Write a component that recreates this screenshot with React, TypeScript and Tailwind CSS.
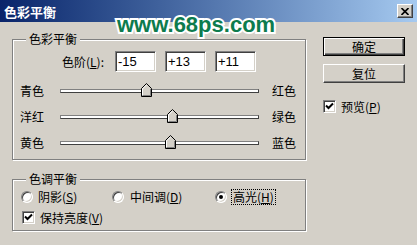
import React from "react";

const font = { fontFamily: '"Noto Sans CJK SC", "Liberation Sans", sans-serif' };

function Thumb({ value }: { value: number }) {
  // track is 199px wide, thumb 11px
  const left = Math.round(((value + 100) / 200) * 188);
  return (
    <svg
      className="absolute top-[-7px]"
      style={{ left }}
      width="11"
      height="14"
      viewBox="0 0 11 14"
    >
      <path d="M0.5 13.5 V5.5 L5.5 0.5 L10.5 5.5 V13.5 Z" fill="#d4d0c8" stroke="#000" />
      <path d="M1.5 12.5 V5.9 L5.5 1.9" fill="none" stroke="#fff" />
      <path d="M9.5 6 V12.5 H1.5" fill="none" stroke="#808080" />
    </svg>
  );
}

function SliderRow({ left, right, value }: { left: string; right: string; value: number }) {
  return (
    <div className="flex items-center h-[26px] pl-[7px]">
      <span className="w-[40px] text-[12px] leading-none">{left}</span>
      <div className="relative w-[199px] h-[4px] bg-white border-t border-t-[#808080] border-b border-b-[#404040] border-l border-l-[#808080] border-r border-r-[#404040]">
        <Thumb value={value} />
      </div>
      <span className="ml-[13px] text-[12px] leading-none">{right}</span>
    </div>
  );
}

function Field({ value }: { value: string }) {
  return (
    <div
      className="w-[41px] h-[21px] bg-white border border-t-[#808080] border-l-[#808080] border-b-white border-r-white shadow-[inset_1px_1px_0_#404040,inset_-1px_-1px_0_#d4d0c8] pl-[2px] flex items-center text-[13px]"
      style={{ fontFamily: '"Liberation Sans", sans-serif' }}
    >
      {value}
    </div>
  );
}

function Check() {
  return (
    <div className="w-[13px] h-[13px] bg-white border border-t-[#808080] border-l-[#808080] border-b-white border-r-white shadow-[inset_1px_1px_0_#404040,inset_-1px_-1px_0_#d4d0c8] flex items-center justify-center">
      <svg width="9" height="9" viewBox="0 0 9 9">
        <path d="M1 3.5 L3.5 6 L8 1.5" fill="none" stroke="#000" strokeWidth="2" />
      </svg>
    </div>
  );
}

function Radio({ on }: { on?: boolean }) {
  return (
    <div className="w-[12px] h-[12px] rounded-full bg-white border border-t-[#808080] border-l-[#808080] border-b-white border-r-white shadow-[inset_1px_1px_0_#404040,inset_-1px_-1px_0_#d4d0c8] flex items-center justify-center">
      {on && <div className="w-[4px] h-[4px] rounded-full bg-black" />}
    </div>
  );
}

function Group({ title, className, children }: { title: string; className: string; children: React.ReactNode }) {
  return (
    <div className={"relative border border-[#808080] shadow-[1px_1px_0_#fff,inset_1px_1px_0_#fff] " + className}>
      <span className="absolute top-[-8px] left-[13px] px-[3px] bg-[#d4d0c8] text-[12px] leading-[14px]">{title}</span>
      {children}
    </div>
  );
}

export default function App() {
  return (
    <div className="relative w-[417px] h-[245px] bg-[#d4d0c8] text-black overflow-hidden" style={font}>
      <div className="h-[22px] flex items-center justify-between pl-[4px] pr-[4px] bg-gradient-to-r from-[#0a246a] to-[#a6caf0]">
        <span className="text-white font-bold text-[13px] leading-none">色彩平衡</span>
        <div className="w-[16px] h-[14px] bg-[#d4d0c8] border border-t-white border-l-white border-b-[#404040] border-r-[#404040] shadow-[inset_-1px_-1px_0_#808080] flex items-center justify-center">
          <svg width="8" height="7" viewBox="0 0 8 7">
            <path d="M0.5 0 L7.5 7 M7.5 0 L0.5 7" stroke="#000" strokeWidth="1.6" />
          </svg>
        </div>
      </div>

      <div className="flex">
        <div className="ml-[12px] mt-[17px] w-[294px]">
          <Group title="色彩平衡" className="h-[121px] pt-[11px]">
            <div className="flex items-center">
              <span className="w-[102px] text-right pr-[11px] text-[12px] leading-none">
                色阶(<u>L</u>):
              </span>
              <Field value="-15" />
              <div className="w-[9px]" />
              <Field value="+13" />
              <div className="w-[9px]" />
              <Field value="+11" />
            </div>
            <div className="mt-[6px]">
              <SliderRow left="青色" right="红色" value={-15} />
              <SliderRow left="洋红" right="绿色" value={13} />
              <SliderRow left="黄色" right="蓝色" value={11} />
            </div>
          </Group>

          <Group title="色调平衡" className="mt-[19px] h-[52px] pt-[10px]">
            <div className="flex items-center h-[14px] pl-[8px] text-[12px] leading-none">
              <Radio />
              <span className="ml-[5px] w-[74px]">阴影(<u>S</u>)</span>
              <Radio />
              <span className="ml-[6px] w-[85px]">中间调(<u>D</u>)</span>
              <Radio on />
              <span className="ml-[4px] px-[1px] py-[1px] border border-dotted border-black">高光(<u>H</u>)</span>
            </div>
            <div className="flex items-center mt-[7px] pl-[9px] text-[12px] leading-none">
              <Check />
              <span className="ml-[5px]">保持亮度(<u>V</u>)</span>
            </div>
          </Group>
        </div>

        <div className="ml-[17px] mt-[15px] w-[82px] flex flex-col">
          <div className="h-[19px] border border-black bg-[#d4d0c8] shadow-[inset_1px_1px_0_#fff,inset_-1px_-1px_0_#404040,inset_-2px_-2px_0_#808080] flex items-center justify-center text-[12px] leading-none">
            确定
          </div>
          <div className="mt-[8px] h-[19px] border border-t-white border-l-white border-b-[#404040] border-r-[#404040] shadow-[inset_-1px_-1px_0_#808080] flex items-center justify-center text-[12px] leading-none">
            复位
          </div>
          <div className="mt-[17px] flex items-center text-[12px] leading-none">
            <Check />
            <span className="ml-[5px]">预览(<u>P</u>)</span>
          </div>
        </div>
      </div>

      <span
        className="absolute left-[117px] top-[14px] text-[22px] leading-none font-bold text-[#0d7b4d] [-webkit-text-stroke:4px_#fff] [paint-order:stroke_fill]"
        style={{ fontFamily: '"Liberation Sans", sans-serif' }}
      >
        www.68ps.com
      </span>
    </div>
  );
}
